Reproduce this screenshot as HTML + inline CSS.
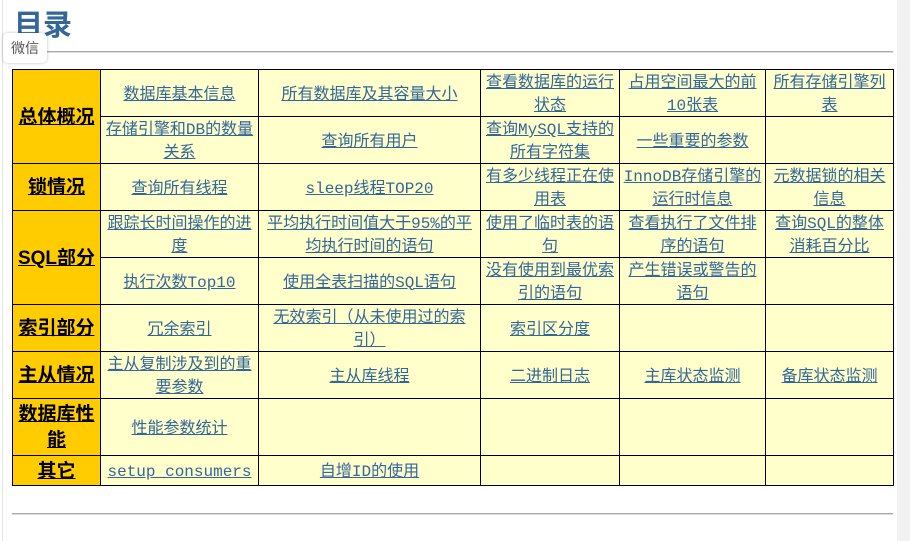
<!DOCTYPE html>
<html><head><meta charset="utf-8"><style>
html,body{margin:0;padding:0;width:910px;height:541px;overflow:hidden;background:#fff;position:relative;font-family:"Liberation Sans","Noto Sans CJK SC",sans-serif}
.lb{position:absolute;left:2px;top:0;width:1px;height:541px;background:#e4e4e4}
.sb{position:absolute;left:897px;top:0;width:13px;height:541px;background:#f1f1f1}
h1{position:absolute;left:14px;top:6px;margin:0;font-size:29px;line-height:40px;color:#336699;font-weight:bold}
.wx{position:absolute;left:3px;top:33px;width:44px;height:30px;background:#fff;border-radius:5px;box-shadow:0 0 3px rgba(0,0,0,.25);font-size:14px;line-height:30px;text-align:center;color:#555}
.hr{position:absolute;left:12px;width:881px;height:0;border-top:1px solid #aaa;border-bottom:1px solid #ddd}
table{position:absolute;left:12px;top:69px;border-collapse:collapse;table-layout:fixed;width:882px}
td{border:1px solid #000;background:#ffffcc;text-align:center;vertical-align:middle;padding:0 3px;font-size:16px;line-height:23px;font-family:"Liberation Mono","Noto Sans CJK SC",monospace}
td a{color:#336699;text-decoration:underline;position:relative;top:2px}
td.h{background:#ffcc00;font-weight:bold;font-size:19px;line-height:26px;padding:0 2px;font-family:"Liberation Sans","Noto Sans CJK SC",sans-serif}
td.h a{color:#000;top:1px}
</style></head><body>
<div class="lb"></div><div class="sb"></div>
<h1>目录</h1>
<div class="hr" style="top:51px"></div>
<div class="wx">微信</div>
<table>
<colgroup><col style="width:88px"><col style="width:158px"><col style="width:222px"><col style="width:139px"><col style="width:146px"><col style="width:128px"></colgroup>
<tr style="height:47px"><td class="h" rowspan="2"><a>总体概况</a></td><td><a>数据库基本信息</a></td><td><a>所有数据库及其容量大小</a></td><td><a>查看数据库的运行状态</a></td><td><a>占用空间最大的前10张表</a></td><td><a>所有存储引擎列表</a></td></tr>
<tr style="height:47px"><td><a>存储引擎和DB的数量关系</a></td><td><a>查询所有用户</a></td><td><a>查询MySQL支持的所有字符集</a></td><td><a>一些重要的参数</a></td><td></td></tr>
<tr style="height:47px"><td class="h"><a>锁情况</a></td><td><a>查询所有线程</a></td><td><a>sleep线程TOP20</a></td><td><a>有多少线程正在使用表</a></td><td style="padding-left:1px;padding-right:1px"><a>InnoDB存储引擎的运行时信息</a></td><td><a>元数据锁的相关信息</a></td></tr>
<tr style="height:47px"><td class="h" rowspan="2"><a>SQL部分</a></td><td><a>跟踪长时间操作的进度</a></td><td><a>平均执行时间值大于95%的平均执行时间的语句</a></td><td><a>使用了临时表的语句</a></td><td><a>查看执行了文件排序的语句</a></td><td><a>查询SQL的整体消耗百分比</a></td></tr>
<tr style="height:47px"><td><a>执行次数Top10</a></td><td><a>使用全表扫描的SQL语句</a></td><td><a>没有使用到最优索引的语句</a></td><td><a>产生错误或警告的语句</a></td><td></td></tr>
<tr style="height:47px"><td class="h"><a>索引部分</a></td><td><a>冗余索引</a></td><td><a>无效索引（从未使用过的索引）</a></td><td><a>索引区分度</a></td><td></td><td></td></tr>
<tr style="height:47px"><td class="h"><a>主从情况</a></td><td><a>主从复制涉及到的重要参数</a></td><td><a>主从库线程</a></td><td><a>二进制日志</a></td><td><a>主库状态监测</a></td><td><a>备库状态监测</a></td></tr>
<tr style="height:57px"><td class="h"><a>数据库性能</a></td><td><a>性能参数统计</a></td><td></td><td></td><td></td><td></td></tr>
<tr style="height:30px"><td class="h"><a>其它</a></td><td><a>setup_consumers</a></td><td><a>自增ID的使用</a></td><td></td><td></td><td></td></tr>
</table>
<div class="hr" style="top:513px"></div>
</body></html>
